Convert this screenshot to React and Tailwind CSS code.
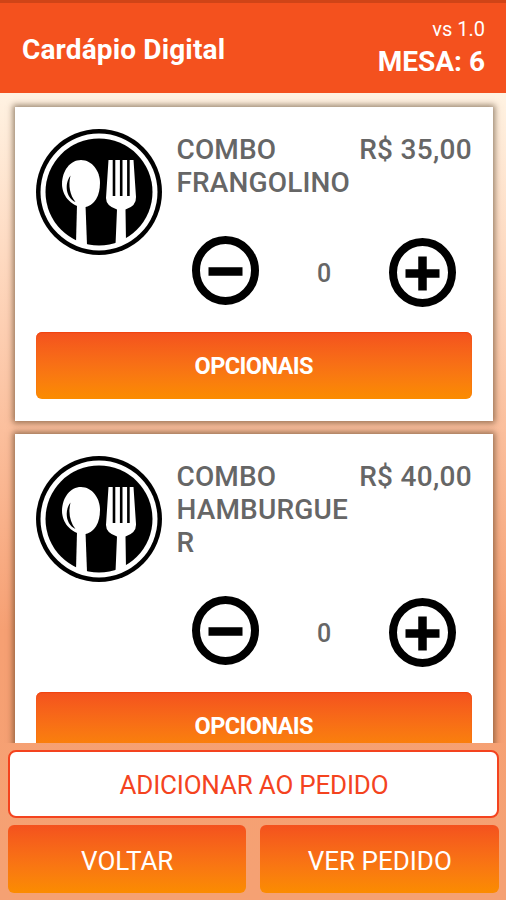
const items = [
  { lines: ['COMBO', 'FRANGOLINO'], price: 'R$ 35,00' },
  { lines: ['COMBO', 'HAMBURGUE', 'R'], price: 'R$ 40,00' },
];

function CutleryLogo() {
  return (
    <svg className="block h-[128px] w-[128px] shrink-0" viewBox="0 0 128 128">
      <circle cx="64" cy="64" r="63" fill="#000" />
      <circle cx="64" cy="64" r="58.500" fill="#fff" />
      <circle cx="64" cy="64" r="53.500" fill="#000" />
      <path d="M46 32 C57 32 65 43 65 55 C65 67 60 78 48.500 79.500 C35 78 27 67 27 56 C27 43 35 32 46 32 Z" fill="#fff" />
      <path d="M42 77 L50.500 77 L52 117 L41 115 Z" fill="#fff" />
      <path d="M35.500 47.500 C29 56 31 70 40.500 74 C35 67 33 58 35.500 47.500 Z" fill="#000" />
      <path d="M73.500 32 L98.500 32 L101 69 Q101.500 78 90.500 81.500 L91 114 L80.500 117 L82 81.500 Q71 78 71 70 Z" fill="#fff" />
      <path d="M79 32 V68 M86.200 32 V68 M93.400 32 V68" stroke="#000" strokeWidth="2.600" fill="none" />
    </svg>
  );
}

function RoundIcon({ plus }) {
  return (
    <svg className="block h-[70px] w-[68px]" viewBox="0 0 68 70">
      <ellipse cx="33.500" cy="34.500" rx="29.500" ry="30.500" fill="none" stroke="#000" strokeWidth="8" />
      <path d="M16.500 35.500 H50.500" stroke="#000" strokeWidth="8.500" />
      {plus && <path d="M33.500 18.500 V52.500" stroke="#000" strokeWidth="8.500" />}
    </svg>
  );
}

function Card({ item }) {
  return (
    <section className="shrink-0 bg-white px-[21px] pt-[21px] pb-[21.500px] shadow-[0_0_6px_2px_rgba(70,45,20,0.55)]">
      <div className="flex">
        <div className="-ml-px"><CutleryLogo /></div>
        <div className="ml-[14px] flex flex-1 justify-between pt-[4.900px] text-[28px] leading-[33px] font-medium tracking-[0.15px] text-[#666]">
          <h2>
            {item.lines.map((line) => (
              <span key={line} className="block">{line}</span>
            ))}
          </h2>
          <span className="tracking-[0.3px] whitespace-nowrap">{item.price}</span>
        </div>
      </div>
      <div className={item.lines.length > 2 ? 'mt-[12.800px] flex pl-[156px]' : 'mt-[-20px] flex pl-[156px]'}>
        <RoundIcon />
        <span className="w-[129px] pt-[23.400px] text-center text-[25px] leading-[30px] font-medium text-[#666]">0</span>
        <div className="pt-[2px]"><RoundIcon plus /></div>
      </div>
      <button className="mt-[24px] block h-[67px] w-full rounded-[6px] bg-linear-to-b from-[#f4511e] to-[#fb8c00] pt-[3px] text-[23.500px] font-bold tracking-[-0.6px] text-white shadow-[inset_0_1px_1px_#f0430f]">
        OPCIONAIS
      </button>
    </section>
  );
}

export default function App() {
  return (
    <div className="flex h-[900px] w-[506px] flex-col overflow-hidden bg-linear-to-b from-[#fff3e3] from-10% via-[#f6a073] via-70% to-[#f5a173] font-[Roboto]">
      <header className="flex h-[93px] shrink-0 items-center justify-between border-t-[3px] border-[#d04417] bg-[#f4511e] px-[21px] text-white">
        <h1 className="mt-1 ml-px text-[28px] font-bold tracking-[0.15px]">Cardápio Digital</h1>
        <div className="flex flex-col items-end pt-px">
          <span className="text-[20px] leading-[26px]">vs 1.0</span>
          <span className="pt-px text-[28px] leading-[38px] font-bold">MESA: 6</span>
        </div>
      </header>
      <main className="flex h-[650px] shrink-0 flex-col gap-[13.500px] overflow-hidden pt-[14px] pr-[13px] pl-[14.500px]">
        {items.map((item) => <Card key={item.price} item={item} />)}
      </main>
      <footer className="flex flex-col gap-[7px] px-[7.500px] pt-[7px] text-[26px]">
        <button className="h-[68px] rounded-[8px] border-2 border-[#f4431e] bg-white pt-[3px] pl-[2px] tracking-[-0.2px] text-[#f4431e]">ADICIONAR AO PEDIDO</button>
        <div className="flex gap-[14px]">
          <button className="h-[68px] flex-1 rounded-[6px] bg-linear-to-b from-[#f4511e] to-[#fb8c00] pt-[4px] pl-px text-white">VOLTAR</button>
          <button className="h-[68px] flex-1 rounded-[6px] bg-linear-to-b from-[#f4511e] to-[#fb8c00] pt-[4px] pl-px text-white">VER PEDIDO</button>
        </div>
      </footer>
    </div>
  );
}
